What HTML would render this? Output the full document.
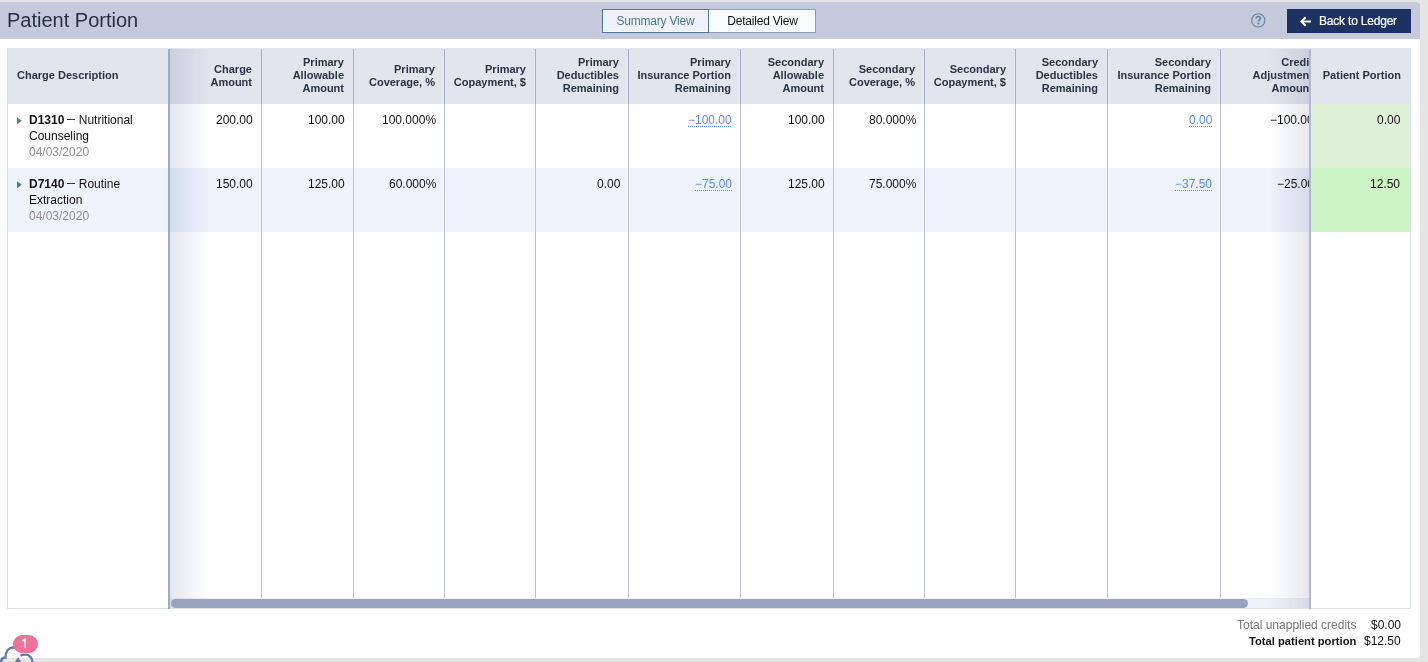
<!DOCTYPE html>
<html><head><meta charset="utf-8">
<style>
*{box-sizing:border-box;margin:0;padding:0}
html,body{width:1428px;height:662px;overflow:hidden;background:#e5e5e5;font-family:"Liberation Sans",sans-serif;}
#panel{position:absolute;left:0;top:2px;width:1420px;height:656px;background:#fff;border-radius:0 4px 3px 0;overflow:hidden}
#hdr{position:absolute;left:0;top:0;width:1420px;height:37px;background:#c4cadb}
#title{position:absolute;left:7px;top:6px;font-size:20px;color:#27303f;line-height:24px;white-space:nowrap}
.seg{position:absolute;top:7px;height:24px;border:1px solid #4f7aa0;font-size:12px;line-height:22px;text-align:center;white-space:nowrap}
.a{position:absolute}
.th{position:absolute;top:48px;height:56px;padding-bottom:2px;background:#e1e5ee;font-weight:bold;font-size:11px;line-height:13px;color:#2a3344;display:flex;align-items:center;justify-content:flex-end;text-align:right;padding-right:9px;white-space:nowrap;overflow:hidden}
.vl{position:absolute;top:49px;width:1px;background:#bec4d4;height:549px}
.td{position:absolute;font-size:12px;line-height:16px;color:#111;text-align:right;white-space:nowrap}
.a,.td,.th{will-change:transform}
.lnk{color:#5b8ced;text-decoration:underline dotted #5b8ced;text-underline-offset:2px;text-decoration-thickness:1px}
</style></head>
<body>
<div class="a" style="left:0;top:2px;width:1420px;height:656px;background:#fff;border-radius:0 4px 3px 0"></div>
<div class="a" style="left:0;top:2px;width:1420px;height:37px;background:#c4cadb;border-radius:0 4px 0 0"></div>
<div class="a" style="left:7px;top:8px;font-size:20px;color:#27303f;line-height:24px;white-space:nowrap">Patient Portion</div>
<div class="a" style="left:602px;top:9px;width:107px;height:24px;border:1px solid #4b7896;background:#eef2fa;box-shadow:inset 0 0 0 1px #fff"></div>
<div class="a" style="left:709px;top:9px;width:107px;height:24px;border:1px solid #86a1b6;border-left:none;background:#fafbff;box-shadow:inset 0 0 0 1px #fff"></div>
<div class="a" style="left:602px;top:13px;width:107px;text-align:center;font-size:12px;line-height:16px;color:#4b7896;white-space:nowrap;letter-spacing:-0.2px">Summary View</div>
<div class="a" style="left:709px;top:13px;width:107px;text-align:center;font-size:12px;line-height:16px;color:#111;white-space:nowrap;letter-spacing:-0.2px">Detailed View</div>
<div class="a" style="left:7px;top:48px;width:1404px;height:561px;border:1px solid #dde1eb;background:#fff"></div>
<div class="a" style="left:8px;top:48px;width:1402px;height:56px;background:#e1e5ee"></div>
<div class="a" style="left:8px;top:168px;width:1302px;height:64px;background:#eef3fd"></div>
<div class="th" style="left:8px;width:160px;justify-content:flex-start;padding-left:9px">Charge Description</div>
<div class="th" style="left:170px;width:91px;padding-top:2px;">Charge<br>Amount</div>
<div class="th" style="left:262px;width:91px;">Primary<br>Allowable<br>Amount</div>
<div class="th" style="left:354px;width:90px;padding-top:2px;">Primary<br>Coverage, %</div>
<div class="th" style="left:445px;width:90px;padding-top:2px;">Primary<br>Copayment, $</div>
<div class="th" style="left:536px;width:92px;">Primary<br>Deductibles<br>Remaining</div>
<div class="th" style="left:629px;width:111px;">Primary<br>Insurance Portion<br>Remaining</div>
<div class="th" style="left:741px;width:92px;">Secondary<br>Allowable<br>Amount</div>
<div class="th" style="left:834px;width:90px;padding-top:2px;">Secondary<br>Coverage, %</div>
<div class="th" style="left:925px;width:90px;padding-top:2px;">Secondary<br>Copayment, $</div>
<div class="th" style="left:1016px;width:91px;">Secondary<br>Deductibles<br>Remaining</div>
<div class="th" style="left:1108px;width:112px;">Secondary<br>Insurance Portion<br>Remaining</div>
<div class="th" style="left:1221px;width:101px;">Credit<br>Adjustment<br>Amount</div>
<div class="th" style="left:1311px;width:99px">Patient Portion</div>
<div class="vl" style="left:261px"></div>
<div class="a" style="left:261px;top:49px;width:1px;height:55px;background:#a9b2c9"></div>
<div class="vl" style="left:353px"></div>
<div class="a" style="left:353px;top:49px;width:1px;height:55px;background:#a9b2c9"></div>
<div class="vl" style="left:444px"></div>
<div class="a" style="left:444px;top:49px;width:1px;height:55px;background:#a9b2c9"></div>
<div class="vl" style="left:535px"></div>
<div class="a" style="left:535px;top:49px;width:1px;height:55px;background:#a9b2c9"></div>
<div class="vl" style="left:628px"></div>
<div class="a" style="left:628px;top:49px;width:1px;height:55px;background:#a9b2c9"></div>
<div class="vl" style="left:740px"></div>
<div class="a" style="left:740px;top:49px;width:1px;height:55px;background:#a9b2c9"></div>
<div class="vl" style="left:833px"></div>
<div class="a" style="left:833px;top:49px;width:1px;height:55px;background:#a9b2c9"></div>
<div class="vl" style="left:924px"></div>
<div class="a" style="left:924px;top:49px;width:1px;height:55px;background:#a9b2c9"></div>
<div class="vl" style="left:1015px"></div>
<div class="a" style="left:1015px;top:49px;width:1px;height:55px;background:#a9b2c9"></div>
<div class="vl" style="left:1107px"></div>
<div class="a" style="left:1107px;top:49px;width:1px;height:55px;background:#a9b2c9"></div>
<div class="vl" style="left:1220px"></div>
<div class="a" style="left:1220px;top:49px;width:1px;height:55px;background:#a9b2c9"></div>
<div class="td" style="right:1175px;top:112px">200.00</div>
<div class="td" style="right:1083px;top:112px">100.00</div>
<div class="td" style="right:992px;top:112px">100.000%</div>
<div class="td" style="right:696px;top:112px"><span class="lnk">&minus;100.00</span></div>
<div class="td" style="right:603px;top:112px">100.00</div>
<div class="td" style="right:512px;top:112px">80.000%</div>
<div class="td" style="right:216px;top:112px"><span class="lnk">0.00</span></div>
<div class="td" style="right:114px;top:112px">&minus;100.00</div>
<div class="td" style="right:1175px;top:176px">150.00</div>
<div class="td" style="right:1083px;top:176px">125.00</div>
<div class="td" style="right:992px;top:176px">60.000%</div>
<div class="td" style="right:808px;top:176px">0.00</div>
<div class="td" style="right:696px;top:176px"><span class="lnk">&minus;75.00</span></div>
<div class="td" style="right:603px;top:176px">125.00</div>
<div class="td" style="right:512px;top:176px">75.000%</div>
<div class="td" style="right:216px;top:176px"><span class="lnk">&minus;37.50</span></div>
<div class="td" style="right:114px;top:176px">&minus;25.00</div>
<div class="a" style="left:1311px;top:104px;width:99px;height:64px;background:#def0d8"></div>
<div class="a" style="left:1311px;top:168px;width:99px;height:64px;background:#ccf4c4"></div>
<div class="td" style="right:28px;top:112px">0.00</div>
<div class="td" style="right:28px;top:176px">12.50</div>
<svg class="a" style="left:16px;top:116px" width="8" height="10" viewBox="0 0 8 10"><path d="M1 1.2L5.8 4.7L1 8.2Z" fill="#4a7a9c"/></svg>
<div class="td" style="left:29px;top:112px;text-align:left"><b>D1310</b><span style="display:inline-block;width:8px;height:1.4px;background:#333;vertical-align:4px;margin:0 3.4px 0 3px"></span>Nutritional<br>Counseling<br><span style="color:#8f8f8f">04/03/2020</span></div>
<svg class="a" style="left:16px;top:180px" width="8" height="10" viewBox="0 0 8 10"><path d="M1 1.2L5.8 4.7L1 8.2Z" fill="#4a7a9c"/></svg>
<div class="td" style="left:29px;top:176px;text-align:left"><b>D7140</b><span style="display:inline-block;width:8px;height:1.4px;background:#333;vertical-align:4px;margin:0 3.4px 0 3px"></span>Routine<br>Extraction<br><span style="color:#8f8f8f">04/03/2020</span></div>
<div class="a" style="left:170px;top:598px;width:1139px;height:10px;background:#eef1fa"></div>
<div class="a" style="left:170px;top:49px;width:40px;height:559px;background:linear-gradient(to right,rgba(40,60,100,.12),rgba(40,60,100,0))"></div>
<div class="a" style="left:1269px;top:49px;width:40px;height:559px;background:linear-gradient(to left,rgba(40,60,100,.12),rgba(40,60,100,0))"></div>
<div class="a" style="left:168px;top:49px;width:2px;height:560px;background:#9eabc0"></div>
<div class="a" style="left:1309px;top:49px;width:2px;height:560px;background:#b3b9cc"></div>
<div class="a" style="left:171px;top:599px;width:1077px;height:9px;background:#97a3bf;border-radius:5px"></div>
<div class="a" style="right:72px;top:617px;font-size:12px;line-height:16px;color:#777;white-space:nowrap">Total unapplied credits</div>
<div class="a" style="right:27px;top:617px;font-size:12px;line-height:16px;color:#111;white-space:nowrap">$0.00</div>
<div class="a" style="right:72px;top:633px;font-size:12px;line-height:16px;color:#111;font-weight:bold;font-size:11.2px;white-space:nowrap">Total patient portion</div>
<div class="a" style="right:27px;top:633px;font-size:12px;line-height:16px;color:#111;white-space:nowrap">$12.50</div>
<div class="a" style="left:1287px;top:9px;width:124px;height:24px;background:#1e3163"></div>
<svg class="a" style="left:1300px;top:16px" width="12" height="11" viewBox="0 0 12 11"><path d="M1.2 5.5H11M5.6 1.2L1.3 5.5L5.6 9.8" stroke="#fff" stroke-width="2" fill="none" stroke-linejoin="miter"/></svg>
<div class="a" style="left:1319px;top:13px;font-size:12px;line-height:16px;color:#fff;white-space:nowrap;letter-spacing:-0.2px;-webkit-text-stroke:0.2px #fff">Back to Ledger</div>
<svg class="a" style="left:1250px;top:12px" width="17" height="17" viewBox="0 0 17 17"><circle cx="8.3" cy="8.4" r="6.6" stroke="#5f88a3" stroke-width="1.1" fill="none"/><path d="M6.2 6.6C6.2 5.2 7.1 4.5 8.3 4.5C9.6 4.5 10.4 5.3 10.4 6.3C10.4 7.7 8.4 8 8.4 9.6" stroke="#5f88a3" stroke-width="1.7" fill="none"/><rect x="7.5" y="10.6" width="1.8" height="1.8" fill="#5f88a3"/></svg>
<svg class="a" style="left:0;top:640px" width="40" height="22" viewBox="0 640 40 22"><path d="M1 663 C1 659 3 657.5 5.5 657.5 C5.5 651 9 647.5 13.5 647.5 C18 647.5 21 650 22 653" stroke="#6478a6" stroke-width="2.3" fill="none"/><path d="M20.5 655.8 C23 654 28 654 30.5 657 C32 659 32.5 661 32.5 663" stroke="#6478a6" stroke-width="2.3" fill="none"/><path d="M14.6 662.5 L18 657.2 L21.4 662.5 Z" fill="#6478a6"/></svg>
<div class="a" style="left:13px;top:635px;width:25px;height:18px;border-radius:9px;background:#ef7299;color:#fff;font-size:12px;line-height:18px;text-align:center"></div>
<svg class="a" style="left:20px;top:637px" width="10" height="14" viewBox="0 0 10 14"><path d="M5.2 1.8V11.2M2.4 4.2L5.2 2" stroke="#fff" stroke-width="1.6" fill="none"/></svg>
</body></html>
